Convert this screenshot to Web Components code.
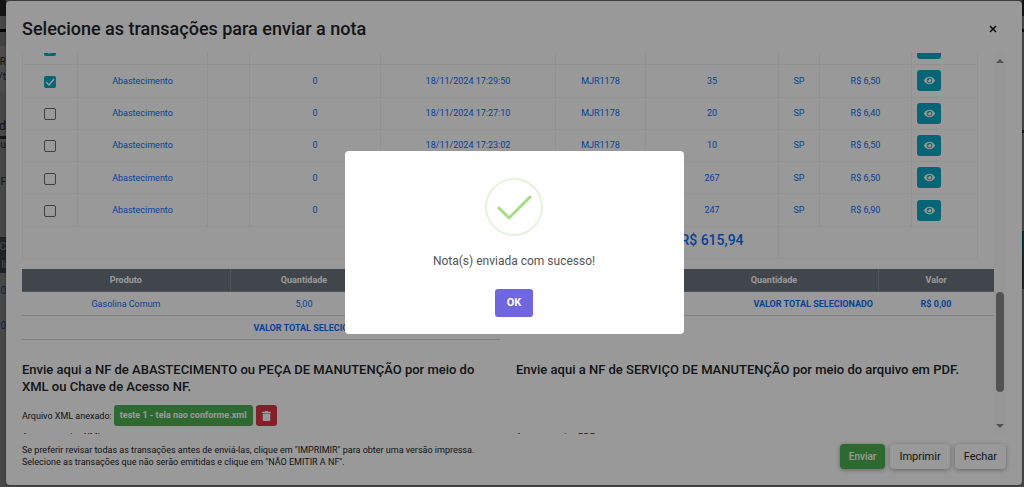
<!DOCTYPE html>
<html lang="pt-BR">
<head>
<meta charset="utf-8">
<meta name="viewport" content="width=device-width, initial-scale=1">
<title>Enviar nota</title>
<style>
html, body { margin: 0; height: 100%; overflow: hidden; }
body { font-family: Roboto, "Liberation Sans", sans-serif; font-size: 9px; color: #212529; background: #fff; }
</style>
</head>
<body>
<invoice-app></invoice-app>
<script>
function define(name, html, setup) {
  const tpl = document.createElement('template');
  tpl.innerHTML = html;
  customElements.define(name, class extends HTMLElement {
    connectedCallback() {
      if (this.shadowRoot) return;
      this.attachShadow({ mode: 'open' }).append(tpl.content.cloneNode(true));
      if (setup) setup(this, this.shadowRoot);
    }
  });
}

/* Page that lies behind the modal: only its margins are visible. */
define('page-behind', `
<style>
:host { display: flex; justify-content: space-between; height: 100%; background: #eee; font-size: 10px; }
.edge { width: 6px; overflow: hidden; display: flex; flex-direction: column; white-space: nowrap; color: #444; }
.edge > div { box-sizing: border-box; flex: none; display: flex; flex-direction: column; justify-content: space-around; align-items: flex-end; overflow: hidden; }
.bar { height: 16px; background: #444; }
.space { height: 13px; }
.rule { height: 3px; background: #000; }
.gap { height: 14px; background: #ddd; }
.card { height: 46px; padding: 8px 0; background: #fff; }
.edge > .big { height: 44px; padding-bottom: 3px; justify-content: flex-end; font-size: 13px; line-height: 15px; }
.dark { height: 3px; background: #444; }
.edge > .form { height: 98px; justify-content: flex-start; gap: 25px; line-height: 12px; }
.head { height: 36px; background: #6c757d; color: #fff; }
.rows { height: 70px; color: #0d6efd; }
.last { height: 80px; background: #eee; }
.end { flex: 1; background: #bbb; }
.right { width: 2px; }
.teal { height: 22px; background: #17a2b8; }
</style>
<div class="edge left"><div class="bar"></div><div class="space"></div><div class="rule"></div><div class="gap"></div>
<div class="card"><span>ER</span><span>/t</span></div><div class="big"><span>d</span></div><div class="dark"></div>
<div class="form"><span>u</span><span>F</span></div><div class="head"><span>C</span><span>li</span></div>
<div class="rows"><span>0</span><span>0</span></div><div class="last"></div><div class="end"></div></div>
<div class="edge right"><div class="bar"></div><div class="space"></div><div class="rule"></div><div class="form"></div>
<div class="dark"></div><div class="form"></div><div class="teal"></div><div class="head"></div></div>`);

define('icon-eye', `
<style>:host { display: block; } svg { display: block; width: 11px; height: 9px; }</style>
<svg viewBox="0 0 576 448" fill="#fff" aria-hidden="true"><path d="M572.5 209.400C518.300 103.600 410.900 32 288 32S57.700 103.600 3.500 209.400a32.400 32.400 0 0 0 0 29.200C57.700 344.400 165.100 416 288 416s230.300-71.600 284.500-177.400a32.400 32.400 0 0 0 0-29.200zM288 368a144 144 0 1 1 144-144 143.900 143.900 0 0 1-144 144zm0-240a95.300 95.300 0 0 0-25.300 3.800 47.900 47.900 0 0 1-66.900 66.900A95.800 95.800 0 1 0 288 128z"/></svg>`);

define('icon-trash', `
<style>:host { display: block; } svg { display: block; width: 9px; height: 10px; }</style>
<svg viewBox="0 0 448 512" fill="#fff" aria-hidden="true"><path d="M432 32H312l-9-19a24 24 0 0 0-22-13H167a24 24 0 0 0-22 13l-9 19H16A16 16 0 0 0 0 48v32a16 16 0 0 0 16 16h416a16 16 0 0 0 16-16V48a16 16 0 0 0-16-16zM32 128v336a48 48 0 0 0 48 48h288a48 48 0 0 0 48-48V128z"/></svg>`);

define('transaction-table', `
<style>
:host { display: block; padding-right: 16px; }
table { width: 100%; height: 227px; table-layout: fixed; border-collapse: collapse; color: #0d6efd; text-align: center; }
tr { height: 32px; }
td { border: 1px solid #f3f3f3; padding: 0; line-height: 12px; }
td.act { padding-left: 5px; text-align: left; }
input { appearance: none; display: block; box-sizing: border-box; width: 12px; height: 12px; margin: 2px auto 0; border: 1px solid #6b6b6b; border-radius: 2px; }
input:checked { border: 0; background: #0cabc4 url('data:image/svg+xml,<svg xmlns="http://www.w3.org/2000/svg" viewBox="0 0 12 12"><path d="M2 6l3 3 5-6" fill="none" stroke="white" stroke-width="1.500"/></svg>'); }
button { display: flex; align-items: center; justify-content: center; width: 24px; height: 21px; padding: 0; border: 0; border-radius: 3px; background: #0cabc4; }
.total td { vertical-align: top; font-size: 14px; font-weight: 500; line-height: 26px; }
</style>
<table>
<colgroup><col style="width:55px"><col style="width:130px"><col style="width:42px"><col style="width:131px"><col style="width:175px"><col style="width:90px"><col style="width:133px"><col style="width:41px"><col style="width:92px"><col style="width:66px"></colgroup>
<tbody></tbody>
</table>`, (host, root) => {
  const rows = [
    ['18/11/2024 17:31:12', '30', 'R$ 6,50', true],
    ['18/11/2024 17:29:50', '35', 'R$ 6,50', true],
    ['18/11/2024 17:27:10', '20', 'R$ 6,40', false],
    ['18/11/2024 17:23:02', '10', 'R$ 6,50', false],
    ['', '267', 'R$ 6,50', false],
    ['', '247', 'R$ 6,90', false]
  ];
  root.querySelector('tbody').innerHTML = rows.map(([when, qty, price, on]) => `
<tr><td><input type="checkbox" aria-label="Selecionar transação"${on ? ' checked' : ''}></td><td>Abastecimento</td><td></td><td>0</td><td>${when}</td><td>${when ? 'MJR1178' : ''}</td><td>${qty}</td><td>SP</td><td>${price}</td><td class="act"><button aria-label="Ver"><icon-eye></icon-eye></button></td></tr>`).join('')
    + '<tr class="total"><td colspan="6"></td><td>R$ 615,94</td><td colspan="3"></td></tr>';
});

const summaryStyle = `
<style>
:host { display: block; }
table { width: 100%; table-layout: fixed; border-collapse: collapse; color: #0d6efd; text-align: center; }
th { height: 22px; padding: 0; background: #6c757d; color: #fff; font-weight: 700; border-right: 1px solid #868e96; border-bottom: 1px solid #868e96; }
th:last-child { border-right: 0; }
td { height: 23px; padding: 0; border-bottom: 1px solid #d4d6d8; }
.sum { padding-right: 5px; text-align: right; font-weight: 700; }
.val { font-weight: 700; }
</style>`;

define('fuel-summary', summaryStyle + `
<table><colgroup><col style="width:208px"><col style="width:148px"><col style="width:122px"></colgroup>
<thead><tr><th>Produto</th><th>Quantidade</th><th></th></tr></thead>
<tbody><tr><td>Gasolina Comum</td><td>5,00</td><td></td></tr>
<tr><td class="sum" colspan="2">VALOR TOTAL SELECIONADO</td><td></td></tr></tbody></table>`);

define('service-summary', summaryStyle + `
<table><colgroup><col style="width:154px"><col style="width:208px"><col style="width:116px"></colgroup>
<thead><tr><th></th><th>Quantidade</th><th>Valor</th></tr></thead>
<tbody><tr><td class="sum" colspan="2">VALOR TOTAL SELECIONADO</td><td class="val">R$ 0,00</td></tr></tbody></table>`);

define('upload-section', `
<style>
:host { display: block; }
h2 { margin: 0 0 10px; min-height: 34px; font-size: 13px; line-height: 17px; font-weight: 500; }
.file { display: flex; align-items: center; gap: 2px; height: 21px; }
.next { margin-top: 5px; line-height: 12px; }
</style>
<h2><slot name="title"></slot></h2>
<div class="file"><slot></slot></div>
<div class="next"><slot name="next"></slot></div>`);

define('file-chip', `
<style>
:host { display: flex; gap: 3px; }
button { height: 21px; padding: 0 6px; border: 0; border-radius: 3px; font: 700 9px/21px Roboto, sans-serif; color: #fff; background: #4caf50; }
.del { background: #dc3545; }
</style>
<button><slot></slot></button><button class="del" aria-label="Remover"><icon-trash></icon-trash></button>`);

define('scroll-rail', `
<style>
:host { display: flex; flex-direction: column; align-items: center; justify-content: space-between; box-sizing: border-box; width: 12px; padding: 6px 0; background: #fcfcfc; }
svg { display: block; width: 8px; height: 4px; }
.track { flex: 1; display: flex; flex-direction: column; justify-content: flex-end; padding-bottom: 32px; }
.thumb { width: 8px; height: 100px; border-radius: 4px; background: #8b8b8b; }
</style>
<svg viewBox="0 0 8 4"><path d="M0 4L4 0l4 4z" fill="#8b8b8b"/></svg>
<div class="track"><div class="thumb"></div></div>
<svg viewBox="0 0 8 4"><path d="M0 0l4 4 4-4z" fill="#8b8b8b"/></svg>`);

define('action-button', `
<style>
:host { display: block; }
button { height: 25px; padding: 0 9px; border: 0; border-radius: 4px; font: 400 11px/25px Roboto, sans-serif; color: #212529; background: #fff; box-shadow: 0 1px 4px rgba(0,0,0,.35); }
:host([primary]) button { background: #4caf50; color: #fff; font-size: 10px; font-weight: 500; }
</style>
<button><slot></slot></button>`);

define('send-modal', `
<style>
:host { display: flex; flex-direction: column; background: #fff; border-radius: 4px; padding: 0 16px; box-shadow: 0 0 2px rgba(0,0,0,.6); }
header { flex: none; display: flex; align-items: center; justify-content: space-between; height: 52px; padding: 4px 8px 0 0; box-sizing: border-box; }
h1 { margin: 0; font-size: 18px; line-height: 24px; font-weight: 500; }
.close { width: 10px; height: 10px; padding: 1px; border: 0; background: none; }
.close svg { display: block; width: 8px; height: 8px; }
.body { flex: 1; min-height: 0; display: flex; }
.scroll { flex: 1; min-width: 0; overflow: hidden; }
.pair { display: grid; grid-template-columns: 1fr 1fr; column-gap: 16px; }
.sums { margin-top: 10px; }
.uploads { margin-top: 21px; }
footer { flex: none; display: flex; justify-content: space-between; height: 51px; box-sizing: border-box; padding-top: 10px; }
p { margin: 0; line-height: 12px; }
.buttons { display: flex; gap: 5px; }
</style>
<header><h1>Selecione as transações para enviar a nota</h1>
<button class="close" aria-label="Fechar janela"><svg viewBox="0 0 8 8"><path d="M1 1l6 6M7 1L1 7" stroke="#111" stroke-width="1.600"/></svg></button></header>
<div class="body"><div class="scroll">
<transaction-table></transaction-table>
<div class="pair sums"><fuel-summary></fuel-summary><service-summary></service-summary></div>
<div class="pair uploads">
<upload-section><span slot="title">Envie aqui a NF de ABASTECIMENTO ou PEÇA DE MANUTENÇÃO por meio do XML ou Chave de Acesso NF.</span><span>Arquivo XML anexado:</span><file-chip>teste 1 - tela nao conforme.xml</file-chip><span slot="next">Anexar arquivo XML:</span></upload-section>
<upload-section><span slot="title">Envie aqui a NF de SERVIÇO DE MANUTENÇÃO por meio do arquivo em PDF.</span><span slot="next">Anexar arquivo PDF:</span></upload-section>
</div>
</div><scroll-rail></scroll-rail></div>
<footer><p>Se preferir revisar todas as transações antes de enviá-las, clique em "IMPRIMIR" para obter uma versão impressa.<br>Selecione as transações que não serão emitidas e clique em "NÃO EMITIR A NF".</p>
<div class="buttons"><action-button primary>Enviar</action-button><action-button>Imprimir</action-button><action-button>Fechar</action-button></div></footer>`,
(host, root) => {
  const scroll = root.querySelector('.scroll');
  scroll.scrollTop = 21;
});

define('success-dialog', `
<style>
:host { display: flex; flex-direction: column; align-items: center; box-sizing: border-box; width: 339px; padding: 27px 16px 17px; border-radius: 4px; background: #fff; }
svg { display: block; width: 58px; height: 58px; }
p { margin: 16px 0 19px; font-size: 12px; line-height: 18px; color: #545454; }
button { height: 28px; width: 38px; padding: 0; border: 0; border-radius: 3px; background: #7066e0; color: #fff; font: 700 11px/28px Roboto, sans-serif; }
</style>
<svg viewBox="0 0 58 58" fill="none" aria-hidden="true"><circle cx="29" cy="29" r="28" stroke="#a5dc86" stroke-opacity=".3" stroke-width="2"/><path d="M14 30l10 10L45 19" stroke="#a5dc86" stroke-width="3" stroke-linecap="round"/></svg>
<p>Nota(s) enviada com sucesso!</p>
<button>OK</button>`);

define('invoice-app', `
<style>
:host { display: block; height: 100%; }
page-behind, .modal-layer, .dialog-layer { position: absolute; inset: 0; box-sizing: border-box; }
.modal-layer { display: grid; padding: 1px 2px 2px 6px; background: rgba(0,0,0,.5); }
send-modal { min-height: 0; min-width: 0; }
.dialog-layer { display: flex; align-items: center; justify-content: center; padding: 0 0 2px 4px; background: rgba(0,0,0,.4); }
</style>
<page-behind></page-behind>
<div class="modal-layer"><send-modal></send-modal></div>
<div class="dialog-layer"><success-dialog role="dialog"></success-dialog></div>`);
</script>
</body>
</html>
